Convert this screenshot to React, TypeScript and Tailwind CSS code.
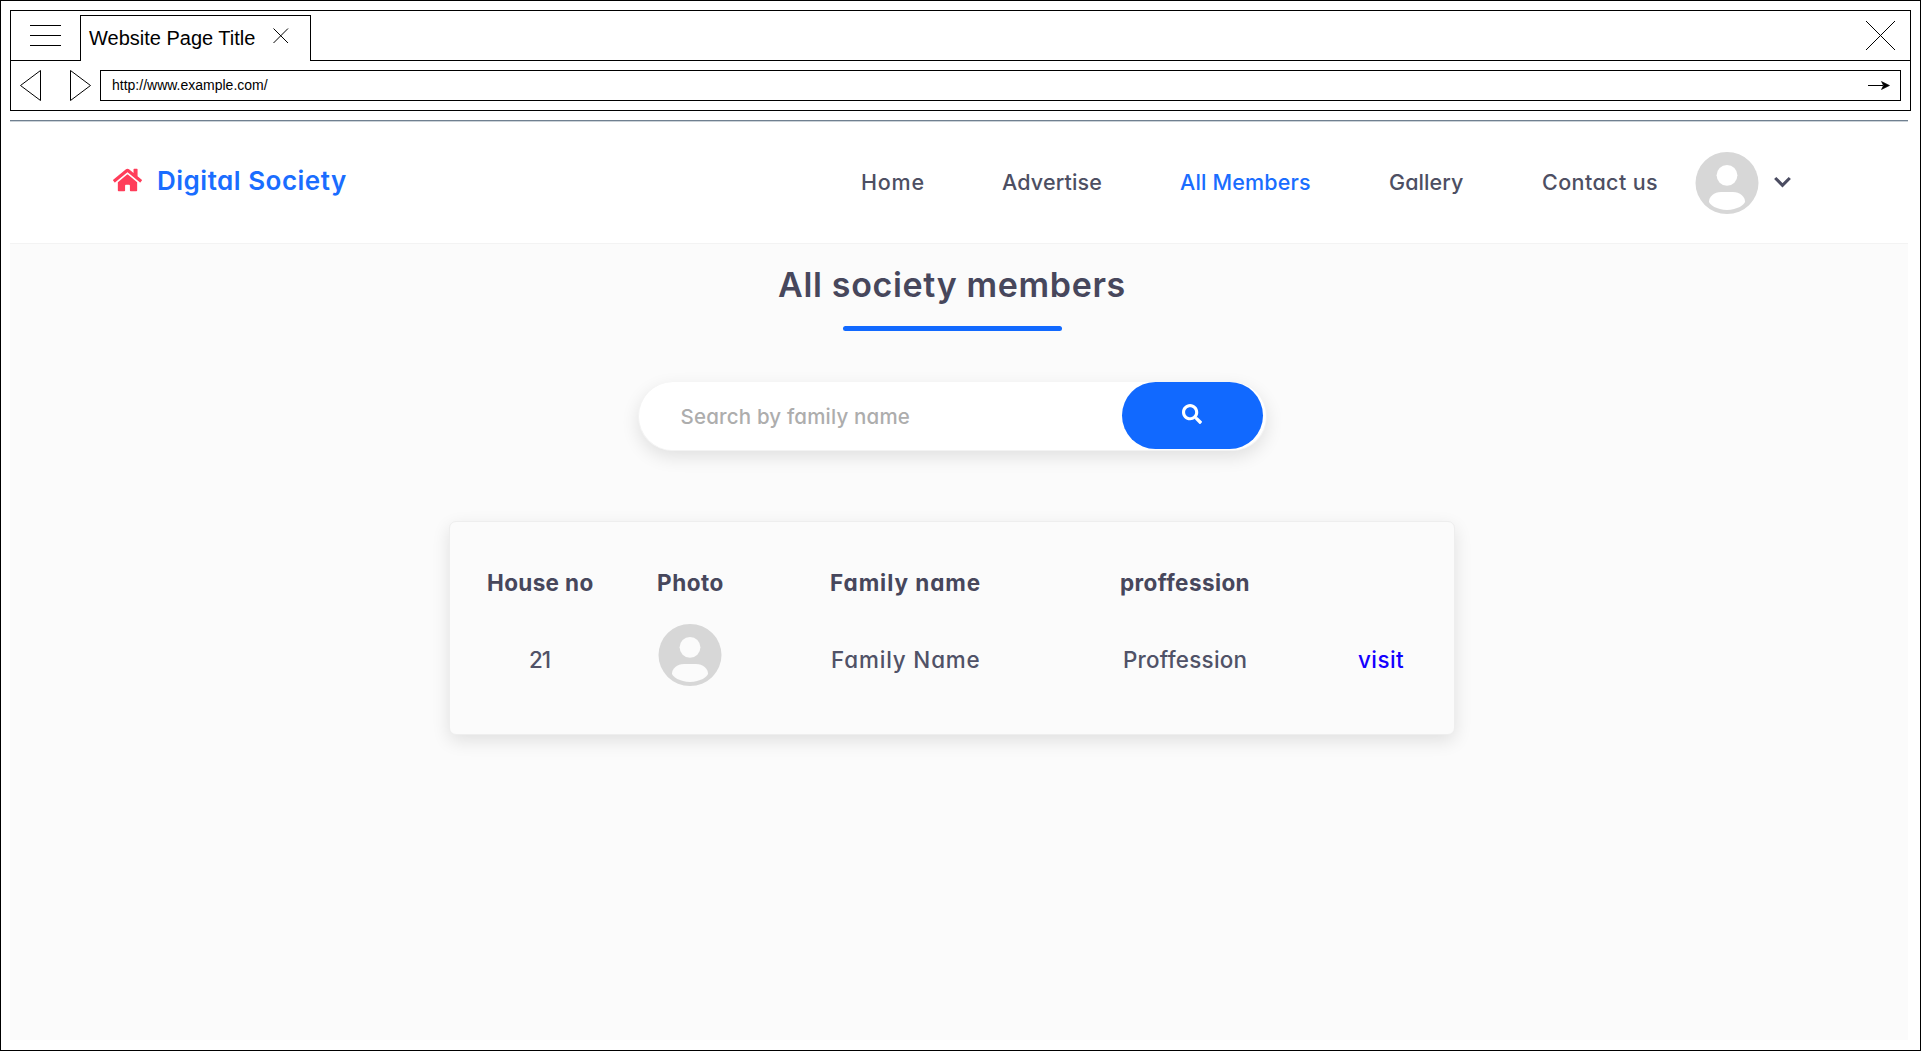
import { FaHome, FaSearch } from "react-icons/fa";

function Avatar() {
  return (
    <svg className="h-[62px] w-[64px] shrink-0" viewBox="0 0 64 62" fill="none">
      <defs>
        <mask id="person">
          <rect width="64" height="62" fill="white" />
          <circle cx="32" cy="23.3" r="10.4" fill="black" />
          <path
            d="M26 40H38C45 40 50 45 50 49.5C50 52.5 42 58 32 58C22 58 14 52.5 14 49.5C14 45 19 40 26 40Z"
            fill="black"
          />
        </mask>
      </defs>
      <ellipse cx="32" cy="31" rx="31.5" ry="31" fill="#d7d7d7" mask="url(#person)" />
    </svg>
  );
}

function BrowserChrome() {
  return (
    <div className="h-[101px] w-[1901px] border border-black font-['Liberation_Sans',sans-serif] text-black">
      <div className="flex h-[50px]">
        <div className="flex w-[69px] items-start border-b border-black pt-[14px] pl-[19px]">
          <div className="flex w-[31px] flex-col gap-[9px]">
            <div className="h-px bg-black" />
            <div className="h-px bg-black" />
            <div className="h-px bg-black" />
          </div>
        </div>
        <div className="mt-1 flex w-[231px] border-x border-t border-black pl-[8px]">
          <span className="mt-[6px] w-[184px] text-[20px] leading-[32px] whitespace-nowrap">Website Page Title</span>
          <svg className="mt-[12px] h-[16px] w-[16px]" viewBox="0 0 16 16" stroke="black" fill="none">
            <path d="M0.5 0.5L15 15M15 0.5L0.5 15" />
          </svg>
        </div>
        <div className="flex flex-1 justify-end border-b border-black pt-[9px] pr-[14px]">
          <svg className="h-[31px] w-[31px]" viewBox="0 0 31 31" stroke="black" fill="none">
            <path d="M1 1L30 30M30 1L1 30" />
          </svg>
        </div>
      </div>
      <div className="flex pt-[9px] pl-[9px]">
        <svg className="h-[31px] w-[21px]" viewBox="0 0 21 31" stroke="black" fill="none">
          <path d="M0.5 15.5L20.5 0.5V30.5Z" />
        </svg>
        <svg className="ml-[29px] h-[31px] w-[21px]" viewBox="0 0 21 31" stroke="black" fill="none">
          <path d="M20.5 15.5L0.5 0.5V30.5Z" />
        </svg>
        <div className="ml-[9px] flex h-[31px] w-[1801px] items-center justify-between border border-black pr-[10px] pl-[11px]">
          <span className="pb-[2px] text-[14px] leading-none">http://www.example.com/</span>
          <svg className="h-[11px] w-[22px]" viewBox="0 0 22 11">
            <path d="M0 5.5H15" stroke="black" />
            <path d="M21.5 5.5L13.5 9.5L15.5 5.5L13.5 1.5Z" fill="black" stroke="black" strokeWidth="0.6" />
          </svg>
        </div>
      </div>
    </div>
  );
}

function Header() {
  return (
    <header className="flex h-[121px] items-center text-[21.5px] font-medium text-[#4d4f63]">
      <FaHome className="mb-[5px] ml-[103px] h-[26px] w-[29px] text-[#ff3d5a]" />
      <span className="mb-[5px] ml-[15px] w-[704px] text-[26px] font-semibold tracking-[0.5px] text-[#1a6dff]">
        Digital Society
      </span>
      <nav className="flex items-center whitespace-nowrap">
        <a className="w-[141px] tracking-[0.8px]">Home</a>
        <a className="w-[178px] tracking-[0.15px]">Advertise</a>
        <a className="w-[209px] tracking-[0.15px] text-[#1a6dff]">All Members</a>
        <a className="w-[153px] tracking-[0.1px]">Gallery</a>
        <a className="w-[153px] tracking-[0.4px]">Contact us</a>
      </nav>
      <Avatar />
      <svg className="mb-[2px] ml-[15px] h-[12px] w-[17px]" viewBox="0 0 17 12" fill="none">
        <path d="M1.2 2L8.5 9.3L15.8 2" stroke="#4b4c61" strokeWidth="3.1" />
      </svg>
    </header>
  );
}

export default function App() {
  return (
    <div className="h-[1052px] bg-white font-['Inter',sans-serif] [font-feature-settings:'cv11']">
      <div className="h-[1051px] w-[1921px] border border-black p-[9px]">
        <BrowserChrome />
        <div className="mt-[9px] h-[2px] w-[1898px] border-b border-[#ccd3d9] bg-[#708090]" />
        <div className="w-[1898px]">
          <Header />
          <main className="flex h-[797px] flex-col items-center border-t border-[#f3f3f3] bg-[#fbfbfb] pt-[21px] pr-[14px] text-[#47475c]">
            <h1 className="text-[34px] leading-[40px] font-semibold tracking-[0.65px]">All society members</h1>
            <div className="mt-[21px] h-[5px] w-[219px] rounded-full bg-[#1169ff]" />
            <div className="mt-[51px] flex h-[69px] w-[629px] items-start justify-between rounded-full border border-t-0 border-[#f3f3f3] bg-white pr-[3px] pl-[42px] shadow-[0_6px_18px_rgba(0,0,0,0.11)]">
              <span className="pt-px text-[20.5px] leading-[67px] font-medium tracking-[0.18px] text-[#adadad]">
                Search by family name
              </span>
              <button className="flex h-[67px] w-[141px] items-center justify-center rounded-full bg-[#1169ff]">
                <FaSearch className="mb-[3px] h-5 w-5 text-white" />
              </button>
            </div>
            <section className="mt-[70px] h-[214px] w-[1006px] rounded-[7px] border border-[#eeeeee] bg-[#fbfbfb] pt-[41px] pl-[37px] shadow-[0_6px_18px_rgba(0,0,0,0.11)]">
              <div className="flex h-10 items-center text-[22.5px] font-bold whitespace-nowrap">
                <span className="w-[170px] tracking-[0.35px]">House no</span>
                <span className="w-[173px] tracking-[0.55px]">Photo</span>
                <span className="w-[290px] tracking-[0.95px]">Family name</span>
                <span className="tracking-[0.4px]">proffession</span>
              </div>
              <div className="mt-[21px] flex h-[62px] items-center text-[22.4px] font-[450] whitespace-nowrap text-[#505267]">
                <span className="mt-[9px] w-[171px] pl-[42px] tracking-[-1px]">21</span>
                <Avatar />
                <span className="mt-[9px] ml-[109px] w-[292px] tracking-[0.85px]">Family Name</span>
                <span className="mt-[9px] w-[235px] tracking-[0.25px]">Proffession</span>
                <a className="mt-[9px] font-medium tracking-[0.45px] text-[#1400ff]">visit</a>
              </div>
            </section>
          </main>
        </div>
      </div>
    </div>
  );
}
